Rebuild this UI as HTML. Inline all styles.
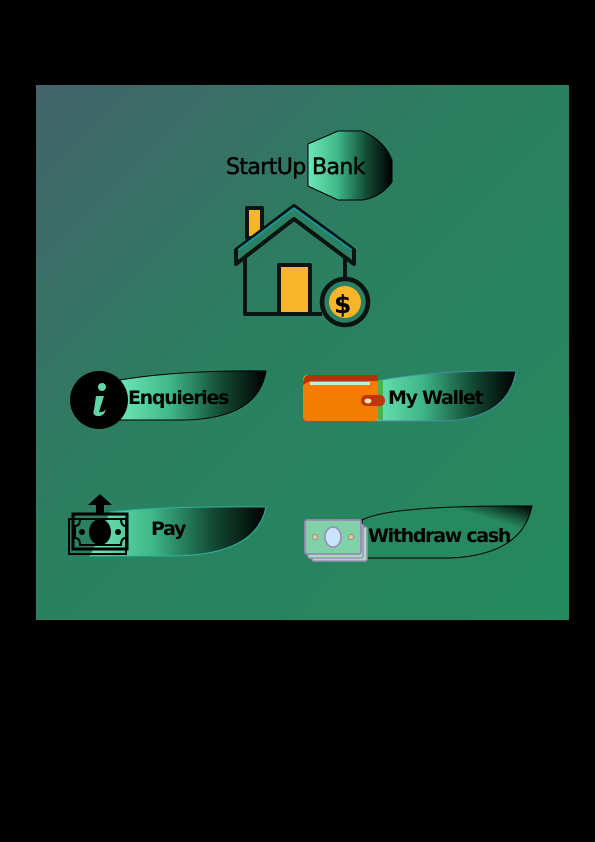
<!DOCTYPE html>
<html><head><meta charset="utf-8"><style>
html,body{margin:0;padding:0;background:#000;width:595px;height:842px;overflow:hidden}
svg{display:block}
text{font-family:"DejaVu Sans","Liberation Sans",sans-serif;font-weight:bold;fill:#000}
</style></head><body>
<svg width="595" height="842" viewBox="0 0 595 842" xmlns="http://www.w3.org/2000/svg">
<defs>
<linearGradient id="bg" x1="0" y1="0" x2="1" y2="1">
<stop offset="0" stop-color="#44636a"/><stop offset="0.45" stop-color="#2a8060"/><stop offset="1" stop-color="#25895f"/>
</linearGradient>
<linearGradient id="leaf" x1="0" y1="0" x2="1" y2="0">
<stop offset="0" stop-color="#6ee8b8"/><stop offset="0.35" stop-color="#3fb88a"/><stop offset="0.7" stop-color="#124a34"/><stop offset="1" stop-color="#000"/>
</linearGradient>
<linearGradient id="wd" x1="0" y1="1" x2="1" y2="0">
<stop offset="0" stop-color="#27895f"/><stop offset="0.75" stop-color="#27895f"/><stop offset="1" stop-color="#000"/>
</linearGradient>
</defs>
<rect x="36" y="85" width="533" height="535" fill="url(#bg)"/>

<!-- title badge -->
<path d="M308 144 L338 131 L362 131 Q384 140 392 160 L392 182 Q380 198 362 200 L338 200 L308 186 Z" fill="url(#leaf)" stroke="#000" stroke-width="1"/>
<text x="226" y="174" font-size="22" style="font-weight:normal;letter-spacing:-0.6px;stroke:#000;stroke-width:0.5">StartUp Bank</text>

<!-- house -->
<g stroke="#0a1410" stroke-width="4" fill="none" stroke-linejoin="round">
<rect x="247" y="208" width="15" height="30" fill="#f9b52a"/>
<path d="M236 264 L236 250 L294 206 L354 250 L354 264 L294 219 Z" fill="#2a8060"/>
<path d="M245 258 L245 314 L322 314"/>
<path d="M345 258 L345 280"/>
<rect x="279" y="265" width="31" height="49" fill="#f9b52a"/>
<circle cx="345" cy="302" r="23" fill="#2a8060" stroke-width="4.5"/>
<circle cx="345" cy="302" r="16" fill="#f9b52a" stroke="none"/>
</g>
<path d="M238 250 L294 208 L352 250" stroke="#1aa0b0" stroke-width="1.5" fill="none"/>
<text x="334" y="313" font-size="25">$</text>

<!-- enquiries -->
<path d="M120 380 Q180 370 266 371 Q258 420 180 420 L118 420 Z" fill="url(#leaf)" stroke="#000" stroke-width="1"/>
<circle cx="99" cy="400" r="29" fill="#000"/>
<circle cx="102" cy="387" r="4" fill="#5fd6a8"/>
<path d="M96 396 L104 396 L99 412 Q103 413 106 409 Q104 417 97 416 Q92 415 94 410 Z" fill="#5fd6a8"/>
<text x="128" y="404" font-size="19" style="letter-spacing:-1.3px">Enquieries</text>

<!-- wallet -->
<path d="M370 382 Q430 370 516 371 Q508 420 440 421 L370 421 Z" fill="url(#leaf)" stroke="#4a8aa0" stroke-width="1"/>
<rect x="303" y="375" width="75" height="46" rx="4" fill="#f47c00"/>
<path d="M303 385 Q303 375 310 375 L378 375 L378 381 L310 381 Z" fill="#b5300c"/>
<rect x="310" y="382" width="60" height="3" fill="#c8ecd8"/>
<rect x="378" y="380" width="5" height="40" fill="#4caf50"/>
<rect x="361" y="395" width="24" height="11" rx="5" fill="#c0350c"/>
<ellipse cx="368" cy="401" rx="3.5" ry="2.5" fill="#f8e0b0"/>
<text x="388" y="404" font-size="19" style="letter-spacing:-1.3px">My Wallet</text>

<!-- pay -->
<path d="M110 512 Q160 506 266 507 Q256 556 170 556 L90 556 Z" fill="url(#leaf)" stroke="#30b0a0" stroke-width="1"/>
<rect x="69" y="519" width="57" height="35" fill="none" stroke="#000" stroke-width="2"/>
<path d="M73 514 L127 514 L127 549 L73 549 Z" fill="none" stroke="#000" stroke-width="3"/>
<path d="M80 519 L121 519 Q121 526 126 526 L126 538 Q121 538 121 545 L80 545 Q80 538 75 538 L75 526 Q80 526 80 519 Z" fill="none" stroke="#000" stroke-width="2"/>
<ellipse cx="100" cy="532" rx="11" ry="13" fill="#000"/>
<circle cx="82" cy="532" r="3" fill="#000"/>
<circle cx="118" cy="532" r="3" fill="#000"/>
<path d="M88 505 L100 494 L112 505 L104 505 L104 514 L96 514 L96 505 Z" fill="#000"/>
<text x="151" y="535" font-size="19" style="letter-spacing:-1.3px">Pay</text>

<!-- withdraw -->
<path d="M362 520 Q390 505 532 506 Q522 555 450 558 L365 558 Z" fill="url(#wd)" stroke="#000" stroke-width="1"/>
<rect x="312" y="527" width="55" height="34" rx="2" fill="#a8dcc0" stroke="#a090b8" stroke-width="1.5"/>
<rect x="308" y="524" width="55" height="34" rx="2" fill="#a8dcc0" stroke="#a090b8" stroke-width="1.5"/>
<rect x="305" y="520" width="56" height="34" rx="2" fill="#80d0a8" stroke="#9a88b4" stroke-width="1.8"/>
<ellipse cx="333" cy="537" rx="8" ry="10" fill="#c8e4ff" stroke="#9a88b4" stroke-width="1.5"/>
<circle cx="315" cy="537" r="2.5" fill="#f0d070" stroke="#9a88b4" stroke-width="1"/>
<circle cx="351" cy="537" r="2.5" fill="#f0d070" stroke="#9a88b4" stroke-width="1"/>
<text x="368" y="542" font-size="19" style="letter-spacing:-1.3px">Withdraw cash</text>
</svg>
</body></html>
